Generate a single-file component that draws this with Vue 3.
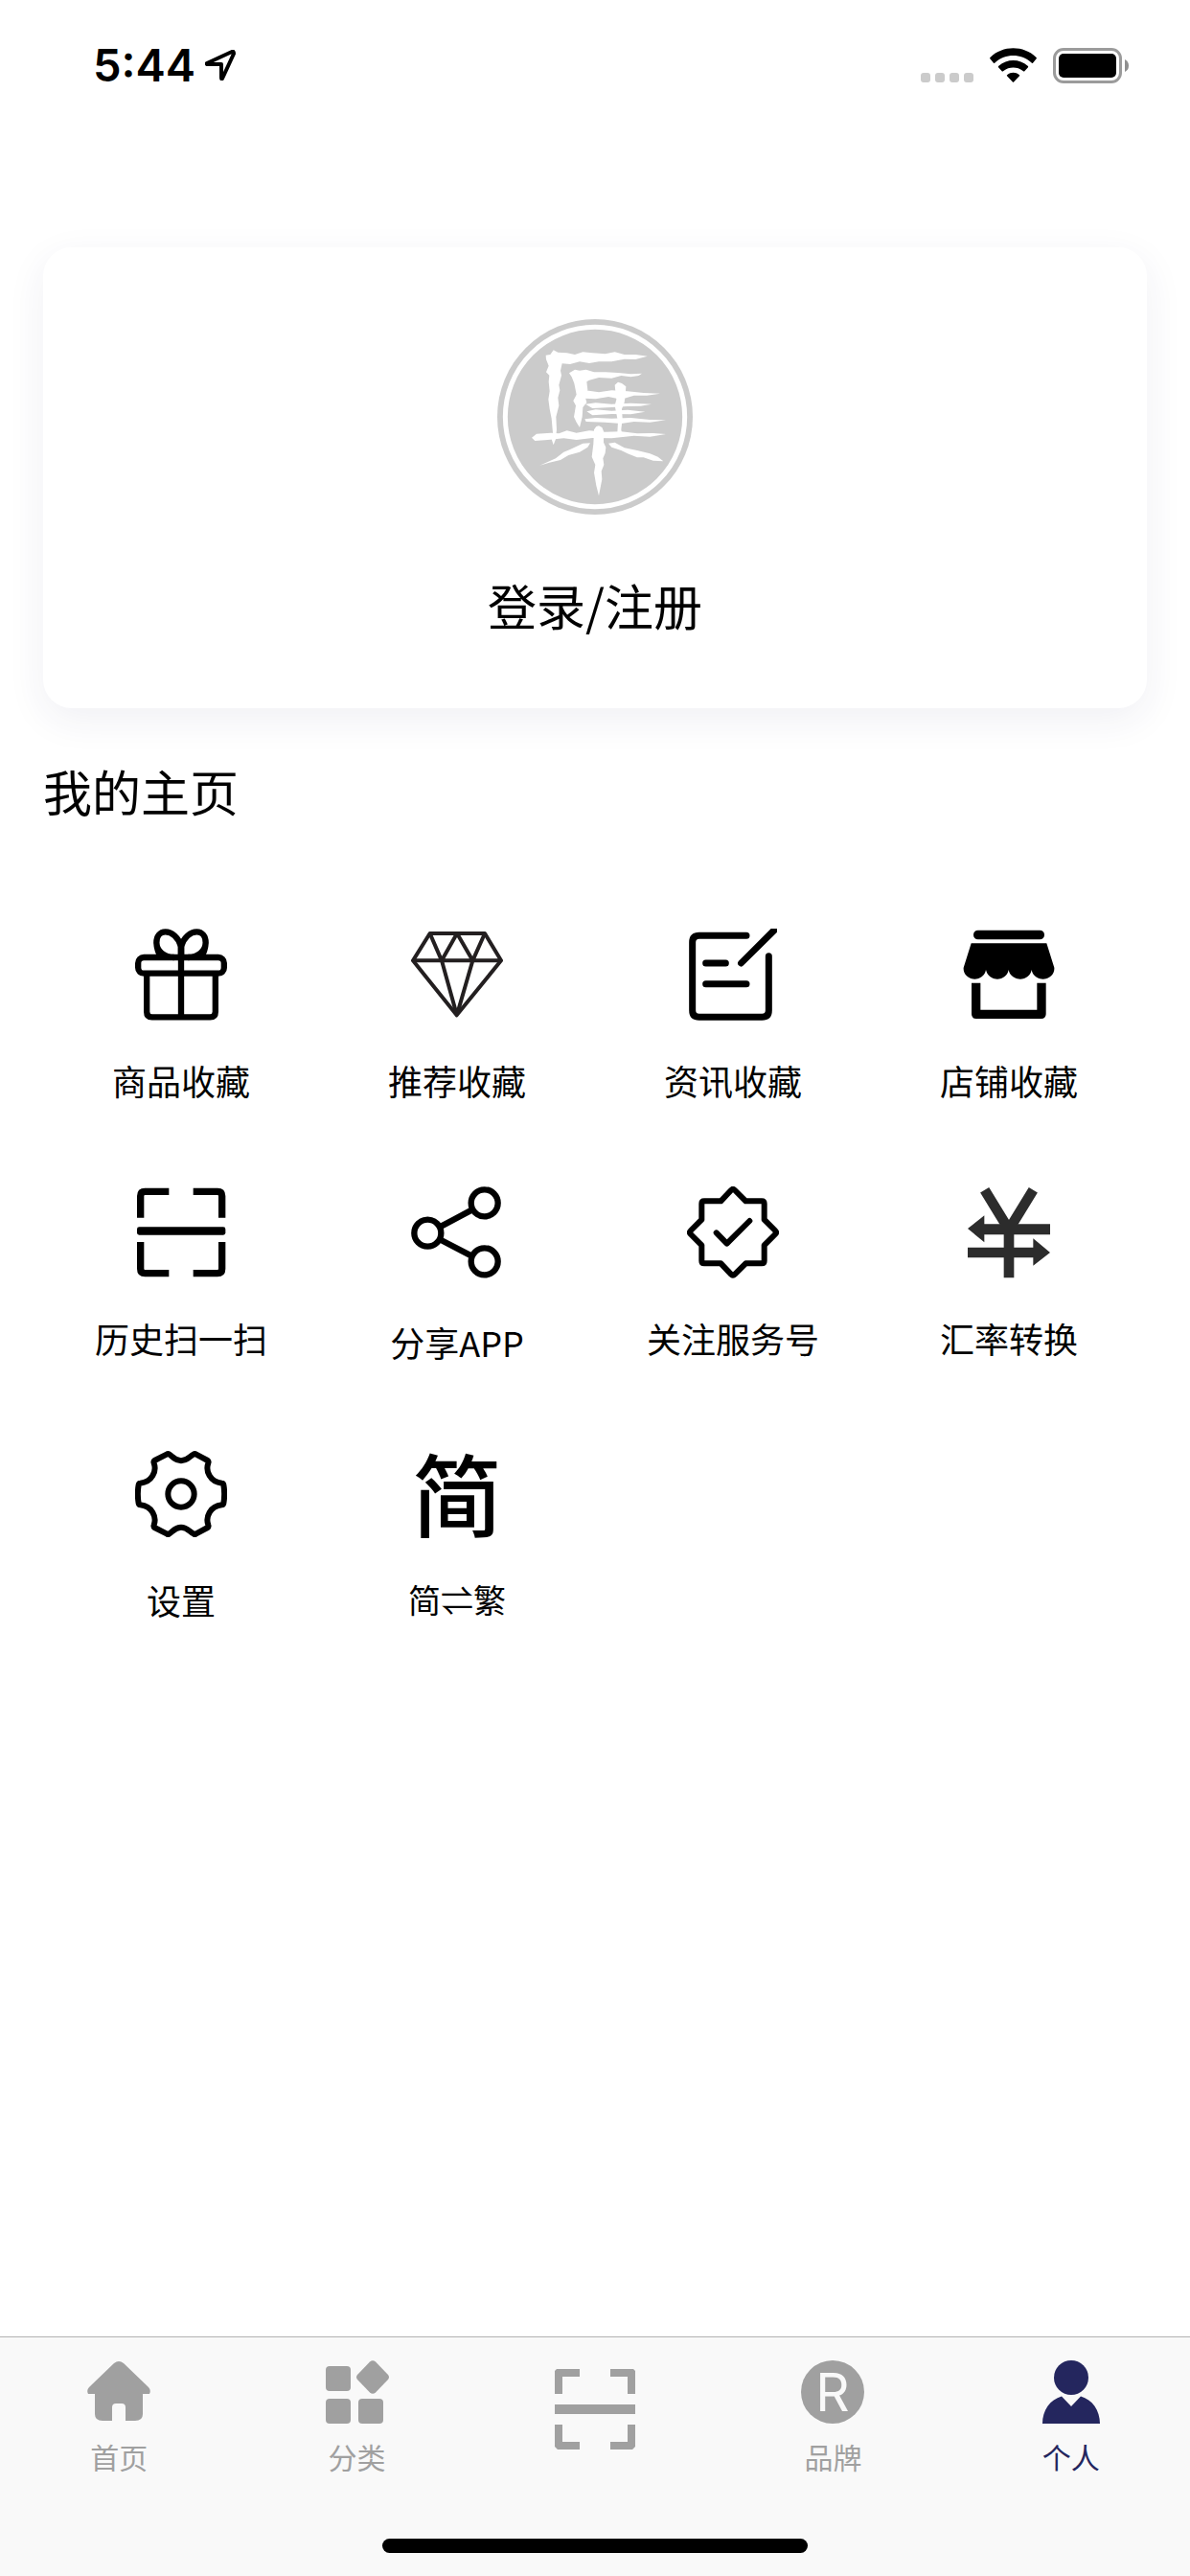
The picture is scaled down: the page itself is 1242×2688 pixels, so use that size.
<script setup>
import { ref } from 'vue'

const services = [
  { id: 'gift', label: '商品收藏' },
  { id: 'diamond', label: '推荐收藏' },
  { id: 'news', label: '资讯收藏' },
  { id: 'store', label: '店铺收藏' },
  { id: 'scan', label: '历史扫一扫' },
  { id: 'share', label: '分享APP', variant: 'mixed' },
  { id: 'badge', label: '关注服务号' },
  { id: 'rate', label: '汇率转换' },
  { id: 'gear', label: '设置' },
  { id: 'lang', label: '简⇌繁', variant: 'compact' },
]

const tabs = [
  { id: 'home', label: '首页' },
  { id: 'category', label: '分类' },
  { id: 'scan', label: '' },
  { id: 'brand', label: '品牌' },
  { id: 'me', label: '个人' },
]

const activeTab = ref('me')
</script>

<template>
  <div class="screen">
    <header class="status">
      <div class="status-left">
        <time class="clock">5:44</time>
        <svg class="locator" viewBox="0 0 32 32" aria-hidden="true">
          <path d="M2 14 L28 2 Q30 1 30 4 L18 30 Q17 31 17 29 V15 H3 Q1 15 2 14Z" />
        </svg>
      </div>
      <div class="status-right">
        <svg width="55" height="37" viewBox="0 0 55 37" fill="#cbcbcb" aria-hidden="true">
          <rect x="0" y="26" width="10" height="10" rx="3" />
          <rect x="15" y="26" width="10" height="10" rx="3" />
          <rect x="30" y="26" width="10" height="10" rx="3" />
          <rect x="45" y="26" width="10" height="10" rx="3" />
        </svg>
        <svg class="wifi" width="49" height="37" viewBox="0 0 147 111" aria-hidden="true">
          <path d="M1 34 Q-1 32 2 29 C40 -9 107 -9 145 29 Q148 32 146 34 L135 47 Q133 49 130 46 C98 17 49 17 17 46 Q14 49 12 47Z" />
          <path d="M27 61 Q25 59 28 56 C54 33 93 33 119 56 Q122 59 120 61 L109 73 Q107 75 104 72 C86 58 61 58 43 72 Q40 75 38 73Z" />
          <path d="M54 88 Q52 86 55 84 C66 75 81 75 92 84 Q95 86 93 88 L76 106 Q73 109 71 106Z" />
        </svg>
        <svg width="79" height="37" viewBox="0 0 79 37" aria-hidden="true">
          <rect x="1.5" y="1.5" width="69" height="34" rx="9.5" fill="none" stroke="#9b9b9b" stroke-width="3" />
          <rect x="6" y="6" width="60" height="25" rx="5" />
          <path d="M75 12 Q79 14 79 18.500 T75 25Z" fill="#8f8f8f" />
        </svg>
      </div>
    </header>

    <main class="content">
      <button class="profile" type="button">
        <svg class="avatar" viewBox="0 0 612 612" aria-hidden="true">
          <circle cx="306" cy="306" r="306" fill="#cbcbcb" />
          <circle cx="306" cy="306" r="281" fill="none" stroke="#fff" stroke-width="15" />
          <g transform="translate(-42 -39)" fill="#fff">
            <path d="M194 152 208 150 218 136 232 143 260 145 285 150 310 142 340 145 380 148 410 142 440 150 475 150 512 155 475 165 440 164 400 172 360 172 330 177 300 172 270 180 245 178 240 200 243 215 235 245 238 262 232 285 235 310 226 345 228 385 225 415 218 433 212 415 216 395 212 350 206 320 202 290 206 265 203 235 205 215 195 205 203 185 195 165Z" />
            <path d="M267 208 285 197 300 200 320 197 345 205 380 205 420 207 460 211 495 209 485 216 460 220 430 216 400 224 360 222 330 230 322 235 325 260 318 285 322 300 310 315 308 345 300 378 290 362 282 345 288 310 280 295 290 275 283 240 275 220Z" />
            <path d="M410 245 420 236 432 240 445 250 443 275 440 300 432 320 434 350 430 385 432 395 418 395 420 360 414 330 410 310 415 290 412 265Z" />
            <path d="M318 262 360 268 400 262 450 265 500 270 552 272 510 278 470 278 430 290 390 282 350 289 315 287Z" />
            <path d="M318 305 350 301 400 305 460 302 525 305 490 311 450 312 400 315 340 318Z" />
            <path d="M322 328 350 322 400 326 450 323 505 329 460 337 400 336 340 340Z" />
            <path d="M316 352 350 348 400 350 460 348 520 354 570 355 520 362 470 360 430 366 380 362 320 360Z" />
            <path d="M150 410 165 398 210 395 235 397 260 388 290 395 330 388 380 392 430 391 480 397 530 396 570 399 520 407 470 404 400 412 340 411 290 417 250 412 200 417 160 420Z" />
            <path d="M345 385 352 375 360 373 370 378 375 390 375 425 382 440 380 458 373 475 376 495 368 515 370 540 360 592 352 560 345 520 349 495 338 470 343 430Z" />
            <path d="M333 427 310 428 270 447 250 455 225 475 175 497 205 488 240 480 265 465 300 455 325 440Z" />
            <path d="M390 428 410 425 440 442 480 450 520 460 545 470 562 484 530 482 500 472 480 472 450 460 430 450 400 440Z" />
          </g>
        </svg>
        <span class="profile-name">登录/注册</span>
      </button>

      <h1 class="heading">我的主页</h1>

      <div class="grid">
        <button v-for="item in services" :key="item.id" class="service" type="button">
          <span v-if="item.id === 'lang'" class="icon icon-text" aria-hidden="true">简</span>
          <svg v-else class="icon" viewBox="0 0 288 288" aria-hidden="true">
            <g v-if="item.id === 'gift'" class="line" stroke-width="19">
              <rect x="9.500" y="90" width="269" height="50" rx="18" />
              <path d="M36.500 140V260Q36.500 277 53 277H235Q251.500 277 251.500 260V140M144 50V277" />
              <path d="M144 90V56C136 28 115 10 95 10C78 10 67 24 67 44C67 70 92 90 122 90M67 44Q69 72 82 90" />
              <path d="M144 90V56C152 28 173 10 193 10C210 10 221 24 221 44C221 70 196 90 166 90M221 44Q219 72 206 90" />
            </g>
            <g v-else-if="item.id === 'diamond'" class="line dark" stroke-width="12">
              <path d="M59 15H231L282 100L143 271L6 100Z" />
              <path d="M6 100H282M59 15L96 100L144 15L193 100L231 15M96 100L141 262M193 100L146 262" />
            </g>
            <g v-else-if="item.id === 'news'" class="line" stroke-width="21">
              <path stroke-linecap="round" d="M186 22H38Q17 22 17 43V256Q17 277 38 277H235Q256 277 256 256V86M59 108H121M59 173H186" />
              <path stroke="none" fill="#000" d="M162 101L263 0H282V11L177 115A10 10 0 0 1 162 101Z" />
            </g>
            <g v-else-if="item.id === 'store'">
              <rect x="33" y="5" width="222" height="29" rx="14" />
              <path d="M26 46H262L286 122C288 142 271 158 251 158C232 158 217 144 215 129C213 144 198 158 180 158C161 158 145 144 143 129C141 144 126 158 108 158C89 158 75 144 72 129C70 144 55 158 37 158C17 158 0 142 2 122Z" />
              <path class="line" stroke-width="28" d="M41 170V268H246V170" />
            </g>
            <g v-else-if="item.id === 'scan'" class="line" stroke-width="22">
              <path d="M106 16H31Q17 16 17 30V98M182 16H258Q272 16 272 30V98M17 174V258Q17 272 31 272H106M272 174V258Q272 272 258 272H182" />
              <rect x="6" y="127" width="277" height="25" rx="7" fill="#000" stroke="none" />
            </g>
            <g v-else-if="item.id === 'share'" class="line" stroke-width="19">
              <circle cx="52" cy="146" r="42" />
              <circle cx="230" cy="52" r="42" />
              <circle cx="230" cy="235" r="42" />
              <path d="M94 125L190 74M94 168L190 218" />
            </g>
            <g v-else-if="item.id === 'badge'" class="line" stroke-width="18">
              <path d="M138 12Q144 6 150 12L184 46H234Q242 46 242 54V104L276 138Q282 144 276 150L242 184V233Q242 241 234 241H184L150 275Q144 281 138 275L106 241H54Q46 241 46 233V184L12 150Q6 144 12 138L46 104V54Q46 46 54 46H106Z" />
              <path stroke-linecap="round" d="M92 145L125 179L196 108" />
            </g>
            <g v-else-if="item.id === 'rate'" fill="#2c2c2c">
              <path fill="none" stroke="#2c2c2c" stroke-width="32" d="M68 11L137 124M220 11L151 124M144 112V286" />
              <path d="M15 132L67 91V118H273V151H67V175ZM273 207L220 163V191H15V223H220V248Z" />
            </g>
            <g v-else class="line" stroke-width="18">
              <circle cx="144" cy="144" r="41" />
              <path d="M106 19Q103 17 100 19L61 39Q57 42 59 47C68 72 54 106 16 110Q12 110 11 115Q6 144 11 173Q12 178 16 178C54 182 68 216 59 241Q57 246 61 249L100 269Q103 271 106 269C118 262 124 248 144 248C164 248 170 262 184 269Q187 271 190 269L227 249Q231 246 229 241C220 216 234 182 272 178Q276 178 277 173Q282 144 277 115Q276 110 272 110C234 106 220 72 229 47Q231 42 227 39L190 19Q187 17 184 19C170 26 164 40 144 40C124 40 118 26 106 19Z" />
            </g>
          </svg>
          <span class="label" :class="item.variant">{{ item.label }}</span>
        </button>
      </div>
    </main>

    <footer class="bottom">
      <nav class="tabs">
        <a
          v-for="tab in tabs"
          :key="tab.id"
          href="#"
          class="tab"
          :class="{ active: tab.id === activeTab }"
          :aria-label="tab.label || '扫一扫'"
          @click.prevent="activeTab = tab.id"
        >
          <svg v-if="tab.id === 'scan'" class="tab-scan" viewBox="0 0 84 84" aria-hidden="true">
            <path d="M2 0H26V8H8V26H0V2ZM58 0H82L84 2V26H76V8H58ZM0 37H84V47H0ZM0 58H8V76H26V84H3L0 81ZM76 58H84V81L81 84H58V76H76Z" />
          </svg>
          <template v-else>
            <svg class="tab-icon" viewBox="0 0 66 66" aria-hidden="true">
              <path v-if="tab.id === 'home'" d="M28 3Q33 -1 38 3L64 28Q67 31 65 35H58V56Q58 63 50 63H40V49Q40 45 36 45H30Q26 45 26 49V63H16Q8 63 8 56V35H1Q-1 31 2 28Z" />
              <g v-else-if="tab.id === 'category'">
                <rect x="0" y="6" width="26" height="26" rx="4" />
                <rect x="0" y="40" width="26" height="26" rx="4" />
                <rect x="34" y="40" width="26" height="26" rx="4" />
                <path d="M46 1.500Q49 -1 52 1.500L65 15Q67 17.500 65 20L52 33.500Q49 36 46 33.500L33 20Q31 17.500 33 15Z" />
              </g>
              <g v-else-if="tab.id === 'brand'">
                <circle cx="33" cy="33" r="33" />
                <text x="33" y="53" text-anchor="middle" class="mark">R</text>
              </g>
              <g v-else>
                <circle cx="33" cy="18" r="18" />
                <path d="M3 66C3 52 11 41 23 37.500L33 48L43 37.500C55 41 63 52 63 66Z" />
              </g>
            </svg>
            <span class="tab-label">{{ tab.label }}</span>
          </template>
        </a>
      </nav>
      <div class="home-indicator"></div>
    </footer>
  </div>
</template>

<style>
body {
  margin: 0;
  background: #fff;
}
</style>

<style scoped>
.screen {
  display: flex;
  flex-direction: column;
  min-height: 100vh;
  color: #000;
  font-family: "Noto Sans CJK SC", "Noto Sans", sans-serif;
}

.screen button {
  border: 0;
  padding: 0;
  background: none;
  color: inherit;
  font: inherit;
  cursor: pointer;
}

.screen svg {
  display: block;
  flex: none;
}

.status {
  display: flex;
  align-items: center;
  justify-content: space-between;
  height: 136px;
  padding: 0 64px 0 97px;
}

.status-left {
  display: flex;
  align-items: center;
  gap: 10px;
}

.clock {
  font: 600 47px/56px Inter, sans-serif;
}

.locator {
  width: 32px;
  height: 32px;
  fill: none;
  stroke: #000;
  stroke-width: 4;
  stroke-linejoin: round;
}

.status-right {
  display: flex;
  gap: 17px;
}

.content {
  flex: 1;
  padding: 122px 45px 0;
}

.screen .profile {
  display: flex;
  flex-direction: column;
  align-items: center;
  gap: 56px;
  width: 100%;
  padding: 75px 0 70px;
  border-radius: 30px;
  background: #fff;
  box-shadow: 0 12px 40px rgba(36, 38, 94, 0.07);
}

.avatar {
  width: 204px;
  height: 204px;
}

.profile-name {
  font-size: 51px;
  line-height: 76px;
}

.heading {
  margin: 48px 0 0;
  font-size: 51px;
  font-weight: 400;
  line-height: 76px;
}

.grid {
  display: grid;
  grid-template-columns: repeat(4, 1fr);
  row-gap: 83px;
  margin-top: 106px;
}

.service {
  display: flex;
  flex-direction: column;
  align-items: center;
  gap: 34px;
}

.icon {
  width: 96px;
  height: 96px;
}

.icon-text {
  font-size: 94px;
  font-weight: 500;
  line-height: 90px;
}

.label {
  font-size: 36px;
  line-height: 56px;
}

.label.mixed {
  padding-top: 4px;
}

.label.compact {
  font-size: 34px;
}

.line {
  fill: none;
  stroke: #000;
  stroke-linejoin: round;
}

.line.dark {
  stroke: #231f20;
}

.bottom {
  display: flex;
  flex-direction: column;
  align-items: center;
  border-top: 1px solid #b2b2b2;
  background: #f9f9f9;
}

.tabs {
  display: flex;
  width: 100%;
  height: 210px;
}

.tab {
  display: flex;
  flex: 1;
  flex-direction: column;
  align-items: center;
  gap: 12px;
  padding-top: 24px;
  color: #a0a0a0;
  fill: currentColor;
  text-decoration: none;
}

.tab.active {
  color: #24265e;
}

.tab-icon {
  width: 66px;
  height: 66px;
}

.tab-scan {
  width: 84px;
  height: 84px;
  margin-top: 9px;
}

.mark {
  fill: #f9f9f9;
  font: 400 55px Inter, sans-serif;
}

.tab-label {
  font-size: 30px;
  line-height: 44px;
}

.home-indicator {
  width: 444px;
  height: 15px;
  margin-bottom: 24px;
  border-radius: 8px;
  background: #000;
}
</style>
